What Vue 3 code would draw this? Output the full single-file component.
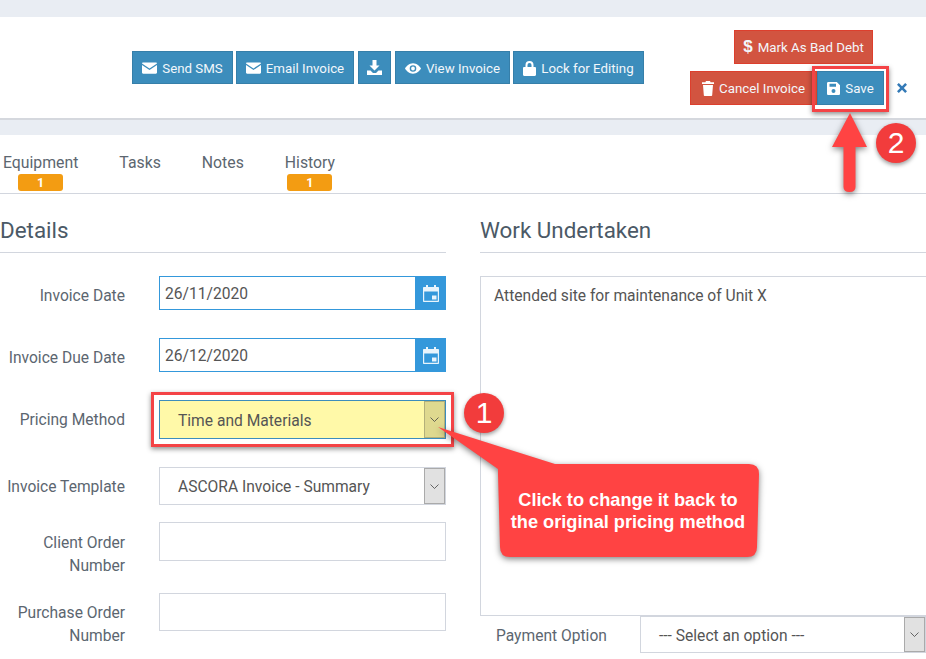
<script setup>
const tabs = [
  { name: 'Equipment', badge: 1 },
  { name: 'Tasks' },
  { name: 'Notes' },
  { name: 'History', badge: 1 }
]
</script>

<template>
  <div class="page">
    <div class="band-top"></div>
    <header class="head">
      <div class="actions">
        <button class="btn blue">
          <svg class="ico" viewBox="0 0 16 12"><path d="M1.2 0h13.6c.7 0 1.2.5 1.2 1.1L8 6.400 0 1.100C0 .5.5 0 1.200 0zM0 2.900l8 5.200 8-5.200v7.900c0 .7-.5 1.200-1.200 1.200H1.200C.5 12 0 11.500 0 10.800z"/></svg>
          Send SMS
        </button>
        <button class="btn blue">
          <svg class="ico" viewBox="0 0 16 12"><path d="M1.2 0h13.6c.7 0 1.2.5 1.2 1.1L8 6.400 0 1.100C0 .5.5 0 1.200 0zM0 2.900l8 5.200 8-5.200v7.900c0 .7-.5 1.200-1.200 1.200H1.200C.5 12 0 11.500 0 10.800z"/></svg>
          Email Invoice
        </button>
        <button class="btn blue icon-only" aria-label="Download">
          <svg class="ico dl" viewBox="0 0 15 15"><path d="M5.500 0h4v5.500h3L7.500 10.500l-5-5h3zM0 10.500h3.500l2.500 2.500h3l2.500-2.500H15V15H0z"/></svg>
        </button>
        <button class="btn blue">
          <svg class="ico eye" viewBox="0 0 17 11"><path fill-rule="evenodd" d="M8.500 0C12.500 0 15.500 3 17 5.500 15.500 8 12.500 11 8.500 11S1.500 8 0 5.500C1.500 3 4.500 0 8.500 0zm0 2a3.500 3.500 0 1 0 0 7 3.500 3.500 0 0 0 0-7zm0 1.500a2 2 0 1 1 0 4 2 2 0 0 1 0-4z"/></svg>
          View Invoice
        </button>
        <button class="btn blue">
          <svg class="ico lock" viewBox="0 0 13 15"><path fill-rule="evenodd" d="M2.500 6V4a4 4 0 0 1 8 0v2h1.300c.7 0 1.200.5 1.200 1.200v6.600c0 .7-.5 1.200-1.200 1.200H1.200C.5 15 0 14.500 0 13.800V7.200C0 6.500.5 6 1.200 6zm2 0h4V4a2 2 0 0 0-4 0z"/></svg>
          Lock for Editing
        </button>
      </div>
      <div class="side">
        <button class="btn red bad"><span class="dollar">$</span> Mark As Bad Debt</button>
        <div class="side-row">
          <button class="btn red cancel">
            <svg class="ico trash" viewBox="0 0 12 15"><path d="M4 0h4l.6 1.300H12V3H0V1.300h3.400zM1 4h10l-.8 10c0 .6-.5 1-1 1H2.800c-.5 0-1-.4-1-1z"/></svg>
            Cancel Invoice
          </button>
          <button class="btn blue save">
            <svg class="ico floppy" viewBox="0 0 13 13"><path fill-rule="evenodd" d="M1.300 0h8.500L13 3.200v8.500c0 .7-.6 1.300-1.300 1.300H1.300C.6 13 0 12.400 0 11.700V1.300C0 .6.600 0 1.300 0zM2.500 1.800v3h6.500v-3zm4 5.200a2 2 0 1 0 0 4 2 2 0 0 0 0-4z"/></svg>
            Save
          </button>
          <svg class="close" viewBox="0 0 10 10"><path d="M1.800 0 5 3.200 8.200 0 10 1.800 6.800 5 10 8.200 8.200 10 5 6.800 1.800 10 0 8.200 3.200 5 0 1.800z"/></svg>
        </div>
      </div>
    </header>
    <div class="band-mid"></div>

    <nav class="tabs">
      <div v-for="t in tabs" :key="t.name" class="tab">
        <span>{{ t.name }}</span>
        <span v-if="t.badge" class="badge">{{ t.badge }}</span>
      </div>
    </nav>

    <main class="cols">
      <section class="left">
        <h2 class="title">Details</h2>
        <div class="row r1">
          <label class="lbl nudge">Invoice Date</label>
          <div class="field date"><span class="val">26/11/2020</span><span class="cal"><svg viewBox="0 0 16 17"><path fill-rule="evenodd" d="M3 0h2v2h6V0h2v2h2c.6 0 1 .4 1 1v13c0 .6-.4 1-1 1H1c-.6 0-1-.4-1-1V3c0-.6.4-1 1-1h2zM1.200 6.500v9.300h13.600V6.500zM9 10.500h4.500V14.500H9z"/></svg></span></div>
        </div>
        <div class="row r2">
          <label class="lbl nudge">Invoice Due Date</label>
          <div class="field date"><span class="val">26/12/2020</span><span class="cal"><svg viewBox="0 0 16 17"><path fill-rule="evenodd" d="M3 0h2v2h6V0h2v2h2c.6 0 1 .4 1 1v13c0 .6-.4 1-1 1H1c-.6 0-1-.4-1-1V3c0-.6.4-1 1-1h2zM1.200 6.500v9.300h13.600V6.500zM9 10.500h4.500V14.500H9z"/></svg></span></div>
        </div>
        <div class="row r2">
          <label class="lbl shift">Pricing Method</label>
          <div class="field select changed"><span class="sel-val">Time and Materials</span><span class="arrow"><svg viewBox="0 0 9 5"><path d="M.5.500 4.500 4.500 8.500.5"/></svg></span></div>
        </div>
        <div class="row r2">
          <label class="lbl shift">Invoice Template</label>
          <div class="field select tall"><span class="sel-val">ASCORA Invoice - Summary</span><span class="arrow"><svg viewBox="0 0 9 5"><path d="M.5.500 4.500 4.500 8.500.5"/></svg></span></div>
        </div>
        <div class="row top r5">
          <label class="lbl two">Client Order Number</label>
          <div class="field plain"></div>
        </div>
        <div class="row top r6">
          <label class="lbl two low">Purchase Order Number</label>
          <div class="field plain short"></div>
        </div>
      </section>

      <section class="right">
        <h2 class="title">Work Undertaken</h2>
        <div class="area">Attended site for maintenance of Unit X</div>
        <div class="pay">
          <label class="pay-lbl">Payment Option</label>
          <div class="field select pay-sel"><span class="sel-val">--- Select an option ---</span><span class="arrow"><svg viewBox="0 0 9 5"><path d="M.5.500 4.500 4.500 8.500.5"/></svg></span></div>
        </div>
      </section>
    </main>

    <div class="frame frame-select"></div>
    <div class="frame frame-save"></div>

    <svg class="marks" viewBox="0 0 926 659" width="926" height="659">
      <path class="mark" d="M438 427 555 464H749Q759 464 759 474L757 547Q757 557 747 557H510Q500 557 500 547L498 474 498 469Z"/>
      <path class="mark" d="M850 113 867 147H855.500L855.500 187Q855.500 192 849.500 192 843.500 192 843.500 187V147H832Z"/>
    </svg>
    <div class="callout-text">Click to change it back to<br>the original pricing method</div>
    <div class="num n1">1</div>
    <div class="num n2">2</div>
  </div>
</template>

<style>
html, body { margin: 0; background: #fff; }
</style>

<style scoped>
.page {
  position: relative;
  width: 926px;
  height: 659px;
  overflow: hidden;
  background: #fff;
  font-family: Roboto, "Liberation Sans", sans-serif;
  font-size: 15.6px;
  color: #555;
}
.band-top { height: 17px; background: #e9edf3; }
.band-mid { height: 15px; background: #e9edf3; }
.head {
  display: flex;
  height: 101px;
  border-bottom: 2px solid #d5d8de;
  box-sizing: content-box;
}
.actions {
  display: flex;
  gap: 3px;
  margin: 34px 0 0 132px;
  height: 33px;
}
.btn {
  display: inline-flex;
  align-items: center;
  justify-content: center;
  gap: 5px;
  box-sizing: border-box;
  height: 33px;
  padding: 0 4px;
  border: 1px solid;
  border-radius: 0;
  font: 400 13.3px Roboto, sans-serif;
  color: #f2f7fb;
  white-space: nowrap;
}
.blue { background: #3c8dbc; border-color: #367fa9; }
.red { background: #d25440; border-color: #dd3f2d; }
.ico { flex: none; fill: #fff; width: 15px; height: 12px; }
.actions .btn { padding-top: 1px; }
.actions .btn:nth-child(1) { width: 101px; }
.actions .btn:nth-child(2) { width: 118px; }
.actions .icon-only { width: 33px; padding: 0; margin: 0 1px; }
.actions .btn:nth-child(4) { width: 115px; }
.actions .btn:nth-child(5) { width: 131px; }
.dl { width: 15px; height: 15px; }
.eye { width: 16px; height: 11px; }
.lock { width: 13px; height: 15px; }
.trash { width: 12px; height: 15px; }
.floppy { width: 13px; height: 13px; }
.side {
  display: flex;
  flex-direction: column;
  margin: 13px 0 0 46px;
  gap: 7px;
}
.bad {
  align-self: flex-start;
  margin-left: 44px;
  width: 139px;
  height: 34px;
}
.dollar { font: 700 17px "Liberation Sans", sans-serif; }
.side-row { display: flex; align-items: center; }
.cancel { width: 127px; height: 34px; }
.save { width: 67px; height: 34px; }
.close { flex: none; width: 10px; height: 10px; margin-left: 13px; fill: #337ab7; }

.tabs {
  display: flex;
  gap: 41px;
  height: 58px;
  box-sizing: border-box;
  padding: 17px 0 0 3px;
  font-size: 15.8px;
}
.tab {
  display: flex;
  flex-direction: column;
  align-items: center;
  line-height: 22px;
  color: #5c6670;
}
.badge {
  width: 45px;
  height: 17px;
  border-radius: 3px;
  background: #f39c12;
  color: #fff;
  font-size: 12.500px;
  font-weight: 700;
  line-height: 17px;
  text-align: center;
}
.cols {
  display: grid;
  grid-template-columns: 446px 1fr;
  column-gap: 34px;
  border-top: 1px solid #d2d6de;
}
.title {
  margin: 0;
  height: 59px;
  box-sizing: border-box;
  padding-top: 22px;
  border-bottom: 1px solid #d2d6de;
  font-size: 22.400px;
  font-weight: 400;
  line-height: 28px;
  color: #4b5966;
}
.row {
  display: grid;
  grid-template-columns: 125px 287px;
  column-gap: 34px;
  align-items: center;
}
.row.top { align-items: start; }
.r1 { margin-top: 23px; }
.r2 { margin-top: 28px; }
.r5 { margin-top: 17px; }
.r6 { margin-top: 16px; }
.lbl { display: block; text-align: right; line-height: 22.500px; color: #5c6670; }
.nudge { position: relative; top: 3px; }
.shift { position: relative; top: 1px; }
.two { padding-top: 10px; }
.low { padding-top: 9px; }
.field {
  display: flex;
  align-items: center;
  box-sizing: border-box;
  border: 1px solid #d2d6de;
  background: #fff;
  color: #555;
}
.date { height: 34px; border-color: #3498db; padding-left: 5px; }
.val { flex: 1; position: relative; top: 1px; }
.cal {
  display: flex;
  align-items: center;
  justify-content: center;
  align-self: stretch;
  width: 31px;
  margin: -1px -1px -1px 0;
  background: #3498db;
}
.cal svg { width: 16px; height: 17px; fill: #e8f4fc; }
.select { height: 38px; padding-left: 18px; }
.sel-val { flex: 1; white-space: nowrap; position: relative; top: 1px; }
.arrow {
  display: flex;
  align-items: center;
  justify-content: center;
  align-self: stretch;
  box-sizing: border-box;
  width: 21px;
  border: 1px solid #aaa;
  background: #e1e1e1;
}
.arrow svg { width: 9px; height: 5px; fill: none; stroke: #444; stroke-width: .8; }
.changed { height: 39px; background: #fff9a8; border-color: #3c8dbc; }
.changed .arrow { background: #dfd98f; border-color: #b4b07a; }
.plain { height: 39px; }
.short { height: 38px; }
.right { min-width: 0; }
.area {
  box-sizing: border-box;
  height: 340px;
  width: 460px;
  margin-top: 23px;
  padding: 8px 13px;
  border: 1px solid #d2d6de;
  line-height: 22px;
  color: #555;
}
.pay { display: flex; align-items: center; height: 37px; }
.pay-lbl { width: 160px; padding: 0 0 0 16px; box-sizing: border-box; color: #5c6670; position: relative; top: 1px; }
.pay-sel { width: 286px; height: 37px; }

.frame {
  position: absolute;
  box-sizing: border-box;
  border: 3px solid #f44346;
  box-shadow: 0 2px 5px rgba(0, 0, 0, .45);
}
.frame-select { left: 151px; top: 392px; width: 303px; height: 55px; }
.frame-save { left: 812px; top: 66px; width: 77px; height: 46px; }
.marks { position: absolute; left: 0; top: 0; pointer-events: none; }
.mark { fill: #ff4343; filter: drop-shadow(0 2px 3px rgba(0, 0, 0, .5)); }
.callout-text {
  position: absolute;
  left: 498px;
  top: 490px;
  width: 260px;
  font: 700 18.200px/21.500px "Liberation Sans", sans-serif;
  color: #fff;
  text-align: center;
}
.num {
  position: absolute;
  width: 40px;
  height: 40px;
  border-radius: 50%;
  background: #f23c3c;
  box-shadow: 0 2px 4px rgba(0, 0, 0, .4);
  font: 400 30px/40px "Liberation Sans", sans-serif;
  color: #fff;
  text-align: center;
}
.n1 { left: 464px; top: 393px; }
.n2 { left: 876px; top: 123px; }
</style>
